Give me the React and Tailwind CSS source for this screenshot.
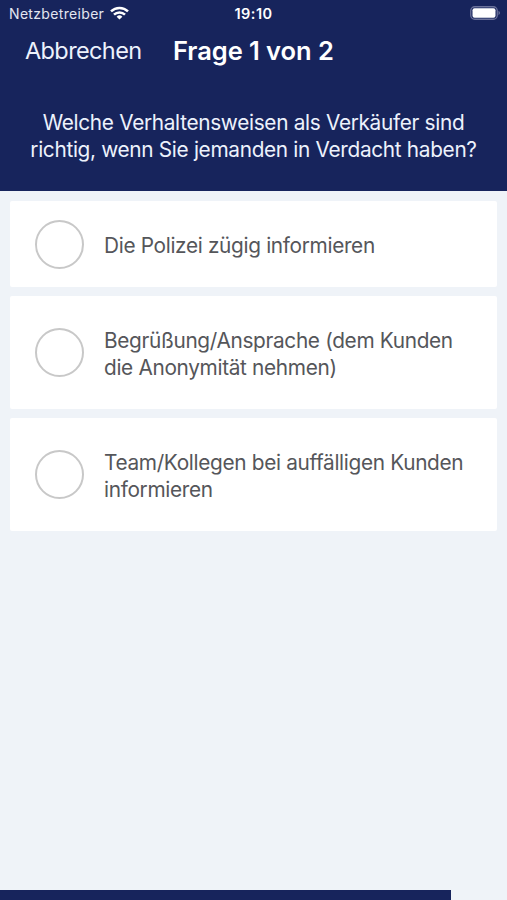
import React from "react";

const answers = [
  { lines: ["Die Polizei zügig informieren"], height: "h-[86px]" },
  {
    lines: ["Begrüßung/Ansprache (dem Kunden", "die Anonymität nehmen)"],
    height: "h-[113px]",
  },
  {
    lines: ["Team/Kollegen bei auffälligen Kunden", "informieren"],
    height: "h-[113px]",
  },
];

function StatusBar() {
  return (
    <div className="grid h-[26px] grid-cols-3 items-center pl-[9px] pr-[6px] text-[14px]">
      <div className="flex items-center gap-[6px]">
        <span className="tracking-[0.33px] text-[#e3e6f1]">Netzbetreiber</span>
        <svg
          width="19"
          height="14"
          viewBox="0 0 19 14"
          fill="none"
          stroke="currentColor"
          strokeWidth="2.5"
        >
          <path d="M1 5.4a12.2 12.2 0 0 1 17 0" />
          <path d="M4 8.7a7.8 7.8 0 0 1 11 0" />
          <path d="M9.5 13.6 6.6 10.8a4.1 4.1 0 0 1 5.8 0z" fill="currentColor" stroke="none" />
        </svg>
      </div>
      <span className="pr-[3px] pt-[2px] text-center text-[14.5px] font-semibold tracking-[0.5px]">
        19:10
      </span>
      <svg className="justify-self-end" width="31" height="14" viewBox="0 0 31 14">
        <rect x="0.75" y="0.75" width="26.5" height="12.5" rx="4" fill="none" stroke="#6b729b" strokeWidth="1.3" />
        <rect x="2.5" y="2.3" width="23" height="9.4" rx="2" fill="#fff" />
        <path d="M28.5 4.8q3 2.2 0 4.4z" fill="#6b729b" />
      </svg>
    </div>
  );
}

function AnswerCard({ lines, height }) {
  return (
    <button className={`flex w-full items-center rounded-[2px] bg-white pl-[25px] text-left ${height}`}>
      <span className="size-[49px] shrink-0 rounded-full border-2 border-[#c8c8c8]" />
      <span className="ml-5 whitespace-nowrap pt-[2px] text-[20.8px] leading-[27px] tracking-[-0.33px] text-[#55565a]">
        {lines.map((line) => (
          <span key={line} className="block">
            {line}
          </span>
        ))}
      </span>
    </button>
  );
}

function App() {
  return (
    <div className="flex h-screen flex-col overflow-hidden bg-[#eff3f8] font-['Inter',sans-serif]">
      <header className="h-[191px] bg-[#17245c] text-white">
        <StatusBar />
        <div className="flex h-[50px] items-center pl-[25px]">
          <button className="w-[148px] text-left text-[23.5px] tracking-[-0.62px] text-[#edf2fc]">
            Abbrechen
          </button>
          <h1 className="text-[25.5px] font-semibold tracking-[-0.06px]">Frage 1 von 2</h1>
        </div>
        <p className="mt-[33px] whitespace-nowrap text-center text-[20.8px] leading-[27px] tracking-[-0.32px] text-[#edf2fc]">
          Welche Verhaltensweisen als Verkäufer sind
          <br />
          richtig, wenn Sie jemanden in Verdacht haben?
        </p>
      </header>
      <main className="flex flex-1 flex-col gap-[9px] px-[10px] pt-[10px]">
        {answers.map((answer) => (
          <AnswerCard key={answer.lines[0]} {...answer} />
        ))}
      </main>
      <div className="h-[10px] w-[451px] bg-[#17245c]" />
    </div>
  );
}

export default App;
